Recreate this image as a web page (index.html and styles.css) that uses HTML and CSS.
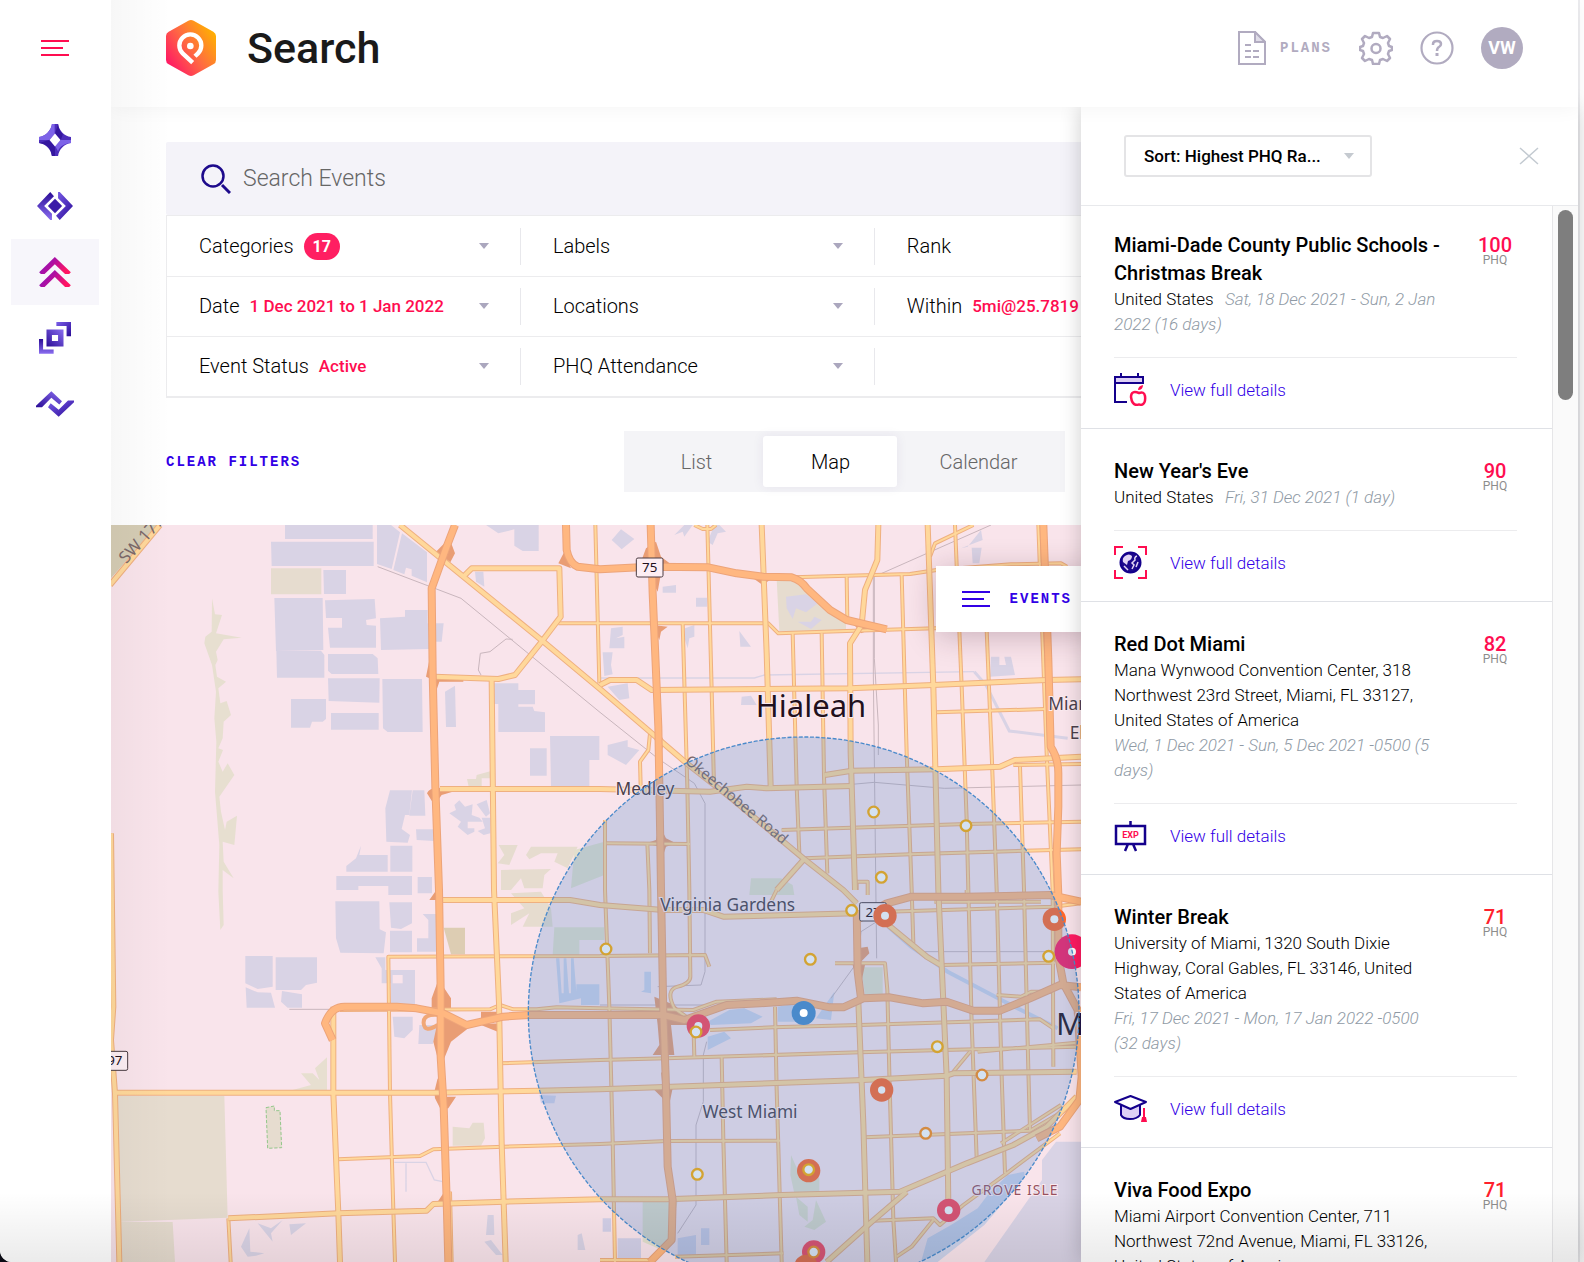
FILE: index.html
```html
<!DOCTYPE html>
<html lang="en">
<head>
  <meta charset="utf-8">
  <meta name="viewport" content="width=device-width, initial-scale=1">
  <title>Search</title>
  <link rel="stylesheet" href="styles.css">
</head>
<body>
<div class="app">

  <nav class="sidebar" aria-label="Main">
    <button class="menu-button" aria-label="Toggle menu">
      <svg width="28" height="16" viewBox="0 0 28 16" stroke="#ff0d50" stroke-width="2"><path d="M0 1h28M0 8h22M0 15h28"/></svg>
    </button>
    <svg width="0" height="0" class="defs" aria-hidden="true">
      <defs>
        <linearGradient id="violet" x1="0" y1="0" x2="1" y2="1"><stop offset="0" stop-color="#7a5fe8"/><stop offset=".5" stop-color="#5233c0"/><stop offset="1" stop-color="#2a0c96"/></linearGradient>
        <linearGradient id="violetUp" x1="0" y1="1" x2="1" y2="0"><stop offset="0" stop-color="#2a0c96"/><stop offset="1" stop-color="#8a6df0"/></linearGradient>
        <linearGradient id="violetDown" x1="0" y1="0" x2="0" y2="1"><stop offset="0" stop-color="#2a0c96"/><stop offset="1" stop-color="#8a6df0"/></linearGradient>
        <linearGradient id="pink" x1="0" y1="0" x2="1" y2=".4"><stop offset="0" stop-color="#7a12c8"/><stop offset=".5" stop-color="#b010a0"/><stop offset="1" stop-color="#ff1463"/></linearGradient>
      </defs>
    </svg>
    <a class="nav-item" href="#" aria-label="Home">
      <svg width="32" height="32" viewBox="0 0 94 94">
        <path fill="#4c2dbb" d="M38 0h18c2 18 18 36 38 38v18C74 58 58 76 56 94H38C36 76 20 58 0 56V38C20 36 36 18 38 0z"/>
        <path fill="#7d63e8" d="M38 0H46V30L30 47H0V38C20 36 36 18 38 0zM94 38V47L64 47 47 64 56 80C60 66 76 57 94 56z"/>
        <path fill="#35179f" d="M56 0 47 28 64 47 70 31Q58 18 56 0zM0 56 30 47 47 66V94H38Q34 60 0 56z"/>
        <path fill="#fff" d="M47 28 31 47l16 19 16-19z"/>
      </svg>
    </a>
    <a class="nav-item" href="#" aria-label="API">
      <svg width="36" height="28" viewBox="0 0 106 82"><path fill="url(#violetDown)" d="M39 0 50 12 21 41 44 64V82L39 82 0 41z"/><path fill="url(#violet)" d="M67 0 106 41 67 82 56 70 85 41 62 18V0z"/><path fill="#3b1ca8" d="M53 20 74 41 53 62 32 41z"/></svg>
    </a>
    <a class="nav-item active" href="#" aria-label="Search">
      <svg width="32" height="30" viewBox="0 0 93 88"><path fill="url(#pink)" d="M46 0 93 45 88 50H76L46 21 16 50H5L0 45z"/><path fill="url(#pink)" d="M46 38 93 83 88 88H76L46 59 16 88H5L0 83z"/></svg>
    </a>
    <a class="nav-item" href="#" aria-label="Products">
      <svg width="32" height="32" viewBox="0 0 94 94"><path fill="url(#violet)" d="M51 0h43v42H81V12H51z"/><path fill="url(#violetDown)" d="M0 50h12v31h31v12H0z"/><path fill="url(#violetUp)" fill-rule="evenodd" d="M22 22h50v50H22zM38 38v18h18V38z"/></svg>
    </a>
    <a class="nav-item" href="#" aria-label="Integrations">
      <svg width="38" height="26" viewBox="0 0 114 77"><path fill="url(#violetUp)" d="M46 0 78 30 70 40 46 20 18 48H0V44z"/><path fill="url(#violet)" d="M68 77 36 48 44 36 68 56 96 28H114V33z"/></svg>
    </a>
  </nav>

  <div class="main">
    <header class="header">
      <svg class="logo" width="50" height="56" viewBox="0 0 150 168">
        <defs><linearGradient id="brand" x1="0" y1="1" x2="1" y2=".25"><stop offset=".1" stop-color="#ff1466"/><stop offset=".55" stop-color="#ff6a42"/><stop offset="1" stop-color="#ffb100"/></linearGradient></defs>
        <path fill="url(#brand)" d="M67 2q8-4 16 0l59 33q8 5 8 13v72q0 9-8 13l-59 33q-8 4-16 0L8 133q-8-4-8-13V48q0-9 8-13z"/>
        <path fill="none" stroke="#fff" stroke-width="13" d="M80 128 50 100A33 33 0 1 1 96 100l-9 9"/>
        <circle cx="73" cy="78" r="10" fill="#fff"/>
      </svg>
      <h1>Search</h1>
      <div class="header-actions">
        <a class="plans" href="#">
          <svg width="28" height="34" viewBox="0 0 28 34" fill="none" stroke="#b1abc0" stroke-width="2"><path d="M1 1h16l10 10v22H1z"/><path d="M17 1v10h10z" fill="#e0dde8"/><path d="M7 14h6M7 20h6M7 26h6M15 20h6M15 26h6"/></svg>
          <span>PLANS</span>
        </a>
        <button aria-label="Settings">
          <svg width="34" height="34" viewBox="0 0 34 34" fill="none" stroke="#b1abc0" stroke-width="2.500" stroke-linejoin="round"><path d="M14 2h6l1 4 3 1 4-2 3 3-2 4 1 3 3 1v3l-3 1-1 3 2 4-3 3-4-2-3 1-1 4h-6l-1-4-3-1-4 2-3-3 2-4-1-3-3-1v-3l3-1 1-3-2-4 3-3 4 2 3-1z"/><circle cx="17" cy="17.500" r="4.500"/></svg>
        </button>
        <button aria-label="Help">
          <svg width="34" height="34" viewBox="0 0 34 34" fill="none" stroke="#b1abc0" stroke-width="2.200"><circle cx="17" cy="17" r="15.500"/><path d="M13 14v-1q0-3 4-3t4 3q0 2-2 3t-2 4" stroke-width="2.500"/><path d="M17 22v3" stroke-width="3"/></svg>
        </button>
        <button class="avatar">VW</button>
      </div>
    </header>

    <div class="content">
      <section class="filters">
        <div class="search-box">
          <svg width="30" height="30" viewBox="0 0 30 30" fill="none" stroke="#1d0a8c" stroke-width="2.500"><circle cx="12" cy="12" r="10.500"/><path d="M21 21l8 8" stroke-width="3"/></svg>
          <input type="search" aria-label="Search Events" placeholder="Search Events">
        </div>
        <div class="filter-grid">
          <button class="filter">Categories <span class="count">17</span><i class="caret"></i></button>
          <button class="filter">Labels<i class="caret"></i></button>
          <button class="filter">Rank</button>
          <button class="filter">Date <b>1 Dec 2021 to 1 Jan 2022</b><i class="caret"></i></button>
          <button class="filter">Locations<i class="caret"></i></button>
          <button class="filter">Within <b>5mi@25.7819</b></button>
          <button class="filter">Event Status <b>Active</b><i class="caret"></i></button>
          <button class="filter">PHQ Attendance<i class="caret"></i></button>
        </div>
      </section>

      <div class="toolbar">
        <button class="clear">CLEAR FILTERS</button>
        <div class="tabs">
          <button>List</button>
          <button class="selected">Map</button>
          <button>Calendar</button>
        </div>
      </div>

      <div class="map">
        <svg class="map-canvas" viewBox="0 0 4401 2211" preserveAspectRatio="xMinYMin slice" role="img" aria-label="Map of Miami">
          <defs>
            <g id="minor">
              <path d="M1467 1293 832 1295 837 1705 847 2055 852 2211M1467 1293 1782 1290 1795 1325"/>
              <path d="M687 1455 1137 1453 1167 1440 1207 1453 1277 1453 1337 1447 1467 1450 1747 1455 1817 1430 1997 1423"/>
              <path d="M1167 1615 1467 1605 1667 1600 2247 1582 2497 1575 2897 1565M2600 1580 2897 1553"/>
              <path d="M682 1903 927 1893 967 1873 1177 1865 1467 1857 1667 1848 2007 1847"/>
              <path d="M352 2080 359 2211M1017 2000 1022 2211"/>
              <path d="M1342 295H1972L2002 325 2207 318 2472 310 2790 305"/>
              <path d="M1453 0 1465 475M1482 885V1095L1495 1445 1505 1845 1512 2211"/>
              <path d="M1789 0 1802 495 1809 785M1750 0 1775 12H1800L1815 0"/>
              <path d="M1715 295 1729 785 1735 1095 1738 1355Q1738 1375 1700 1385T1690 1450L1747 1490 1750 1595"/>
              <path d="M2045 325 2057 785 2065 985M2132 325 2139 755 2149 1045M2207 155 2209 285"/>
              <path d="M2372 150 2387 685 2402 1095 2407 1255M2532 0 2552 485 2567 885 2572 1095 2582 1495 2597 1900"/>
              <path d="M2627 315 2642 685 2657 1095 2672 1655 2682 1945M2727 725 2739 1095 2752 1635 2757 1815"/>
              <path d="M2782 0 2807 685 2825 1095 2827 1625M1609 955 1615 1095 1617 1285M1487 955 1737 957"/>
              <path d="M2047 157 2397 147 2477 135 2700 118 2850 115 2868 125M2477 562 2802 552"/>
              <path d="M2012 915 2567 897 2910 890M2082 1000 2397 988 2647 980 2910 973M2707 720 2910 717"/>
              <path d="M1617 625 1612 675 1587 710 1589 785M2237 1095V1070H2270V1110"/>
              <path d="M2172 1315H2322L2329 1395 2335 1645 2347 2085 2355 2211"/>
              <path d="M2492 1320 2832 1313M1797 1515 1987 1507 2247 1500 2567 1490 2787 1483 2827 1510"/>
              <path d="M2527 1640 2577 1580M2262 1837 2757 1817 2897 1735"/>
              <path d="M1832 1595 1837 1845 1847 2211M1992 1445 1997 1695 2012 2211"/>
              <path d="M2287 2087 2467 2080 2487 2100 2557 2040 2687 1945 2847 1825M2357 2195 2402 2165 2467 2085"/>
              <path d="M1692 2195 2017 2185M1467 2205H1617M2327 1160 2827 1145 2910 1135M2657 1410 2730 1415 2760 1400H2830"/>
              <path d="M2670 1855 2850 1740M1997 1095 1980 1130M2567 1095V1110M2470 1130H2790"/>
              <path d="M2457 95 2472 55 2587 0"/>
            </g>
            <g id="major">
              <path d="M-3 180 147 0M0 925 7 1445 0 1545 12 1705 25 2211"/>
              <path d="M867 0 1057 155 1297 350 1467 492 1622 625 1727 715 1867 825 2077 1000 2197 1095 2237 1135"/>
              <path d="M1057 155 1082 130H1345L1349 275 1292 350 1212 450 1162 462 972 455"/>
              <path d="M1142 465 1149 1095 1164 1435 1172 1855 1184 2211"/>
              <path d="M987 792H1467L1797 800 1907 785 1967 790 2222 783"/>
              <path d="M7 1703H967L1282 1697 1467 1693 2257 1665 2507 1652 2527 1645 2897 1640"/>
              <path d="M667 1445V1705L682 2065 687 2211M987 1125H1377L1467 1140 1657 1155H1777L1837 1175 2237 1165"/>
              <path d="M352 2080 682 2065 947 2057 967 2037 1182 2030 1467 2023H1667L2012 2010 2367 2000 2567 1915 2707 1860 2807 1805 2897 1715"/>
              <path d="M1952 0 1967 385 1979 785M2252 300 2217 355 2219 685 2232 1095M2242 1430 2257 1795 2269 2211"/>
              <path d="M2302 0 2299 105 2262 195 2252 300M2450 0 2467 485 2482 1095 2507 1655 2512 2035"/>
              <path d="M1467 480 1497 465H1577L1622 495 2217 490 2467 480 2807 465 2910 463"/>
              <path d="M2142 750 2222 737 2477 733 2667 725 2712 705 2910 695"/>
              <path d="M2332 1200 2447 1295 2489 1320M2147 2211 2277 2095 2387 2000"/>
              <path d="M2077 1005 1997 1095"/>
            </g>
            <g id="highway">
              <path d="M1032 0 1007 65 962 190 965 445 973 785 984 1095 989 1395V1595L998 1745 1007 2025 1012 2211"/>
              <path d="M1619 0 1625 205 1642 605 1648 955 1650 1095 1657 1465 1664 1655 1670 1925 1685 2025 1682 2145 1617 2211"/>
              <path d="M1365 0 1367 75Q1375 115 1400 125L1467 133 1617 125 1792 127 1877 145 1957 155 2042 157Q2070 165 2087 190L2157 255 2207 285 2327 313"/>
              <path d="M665 1545 642 1495Q660 1445 700 1445H857L917 1450 997 1465 1067 1500 1177 1475 1252 1470H1657L1720 1485 1847 1440 1947 1435 2057 1427 2157 1447H2197L2257 1420 2337 1417 2437 1435 2507 1430 2587 1457H2667L2757 1420 2847 1380 2910 1387"/>
              <path d="M2797 0 2812 405 2819 665Q2842 700 2842 745V845L2837 985 2842 1110V1295L2857 1375 2900 1455 2912 1655 2905 1725 2847 1805 2777 1840"/>
              <path d="M2237 1185 2327 1135 2402 1115H2567L2817 1110 2910 1130M2237 1155 2240 1340 2250 1420"/>
            </g>
          </defs>

          <rect width="4401" height="2211" fill="#f9e4eb"/>

          <g fill="#e6dccf">
            <path fill="#d5ccb4" d="M0 0H140L0 160z"/>
            <path d="M480 130H631V208H480zM15 1713H340L350 2078 15 2091zM25 2091H185L192 2211H25z"/>
            <path d="M998 1208H1062V1288H1020z" fill="#ddcdb3"/>
            <path d="M1025 1805 1075 1810 1085 1793H1118L1122 1840 1110 1862H1025zM1997 163H2060L2205 295V318H2005z"/>
            <path d="M1068 762 1095 762 1097 750 1140 738V760H1112V785H1073z"/>
            <path d="M465 1748 490 1743V1757H507L512 1868 470 1870z" stroke="#94c78b" stroke-width="3" stroke-dasharray="10 5"/>
            <path d="M1163 960H1220L1195 1020 1160 1015 1180 990zM1260 965H1400L1370 1030 1330 1010 1340 985 1290 985 1255 1003 1245 990zM1170 1035 1320 1032 1300 1050 1295 1090H1240L1230 1060 1200 1095H1170z"/>
            <path d="M1200 1105 1290 1100 1320 1150 1325 1205H1235L1255 1165 1200 1200V1165L1240 1150z"/>
            <path d="M545 1695 600 1680 570 1645H605L625 1665 612 1630 648 1597V1695z" fill="#e7dfd0"/>
          </g>
          <path fill="#e7dfd0" d="M303 220 312 268 333 270 315 325 392 338 338 343 315 380 320 405 313 420 318 455 345 470 322 490 328 535 347 528 360 570 338 590 335 640 322 670 336 675 322 710 335 740 350 715 370 750 325 815 330 860 342 915 347 890 378 872 370 960 335 950 338 1010 368 1060 335 1035V1095L338 1200 328 1215 322 1100 325 960 312 800 316 650 310 580 315 500 303 420 280 355 283 335 302 320z"/>
          <path fill="#e2dfcd" d="M1390 975 1480 950V1050L1380 1090zM1920 1060H2010L2045 1080 2050 1110H1915zM2250 1327H2315V1410H2262zM2040 1890 2060 1935 2125 1960V2005H2050L2038 1950zM2055 2015 2090 2045V2090L2065 2070zM2115 2025 2145 2090 2110 2115 2080 2105 2105 2085zM1595 2030H1700L1670 2150 1640 2170 1595 2150zM1330 1207H1480V1245H1405V1290H1325z"/>
          <g fill="#d9d3e5">
            <path d="M522 0H785V42H522zM480 50H788V123H482zM798 0H840L867 22 842 132 798 117zM873 25 948 82V172L902 152V133L885 128 880 148 847 135zM637 135H705V207H639zM490 219H635L637 375 495 378zM642 226 791 222 795 280 765 285 767 300 795 302V368H657L651 308H693V279H645zM807 280 882 275V255H950V295H998L992 350H975L955 372 810 375z"/>
            <path d="M496 377H630L640 390V458H498zM651 387H785L800 400 802 447H662L651 437zM651 460H806L805 533 653 528zM814 462H933L935 621H830L816 610zM540 522H645V582L635 590H603L597 608H540zM660 564H803V614H660z"/>
            <path d="M1002 500 1032 482 1035 606H1005zM1148 475H1222V495H1272V538H1222V545H1265L1270 558 1302 562V621H1162V537H1148zM1257 670H1307V752H1257zM1317 633H1465V705H1435V783H1320zM837 796H903L895 870H882L872 912 897 930 890 953 826 950 823 850zM905 796H940L943 872H895zM915 913H970V948L917 945z"/>
            <path d="M750 962 745 990H830V1040H706V1023L735 1000zM838 962H904V1040H838zM676 1053H903V1110H832V1083H742V1095H676zM920 1056H963V1105H920zM1015 865 1035 855 1030 840 1045 826 1062 845 1085 838 1082 870 1105 878 1115 890H1070V910H1090V920L1070 930 1040 905 1050 890zM1097 838 1127 825 1137 865 1125 875zM1112 878H1138V925L1118 930 1100 918 1122 910z"/>
            <path d="M673 1129H805L806 1213 825 1222 818 1285 688 1283 675 1240zM835 1132H903V1195L870 1212 840 1208zM837 1217H903V1282H837zM935 1167H975V1280H918V1240H952V1185zM403 1293H485V1385L440 1392 403 1375zM494 1297H618V1373L585 1380 570 1395H494zM404 1387 440 1402 480 1403 492 1448H407zM513 1398 573 1408V1448H530L510 1430zM793 1297H823V1335H912V1440L840 1435V1375H812V1330zM845 1475H905V1515L880 1540 850 1535zM925 1500H990L965 1557H922z"/>
            <path d="M1125 0 1162 25 1210 13V62L1235 78H1283V0zM1092 140H1117L1120 185 1095 170zM1502 45 1530 13 1570 42 1532 73zM1655 185 1695 180V203H1655zM1755 218H1788V245H1755zM1500 310 1535 305V330L1515 340 1540 335V370H1495zM1475 382H1505L1500 420 1505 448 1480 453zM1490 485 1550 475 1555 520 1525 525zM1885 318 1920 365H1888zM1490 660 1550 645V665L1585 675 1545 720 1490 690zM1892 515 1920 512 1937 540H1890z"/>
            <path d="M1690 30 1720 0H1745L1720 35 1715 20zM1790 50 1810 0H1825L1845 20 1820 25 1805 60zM1722 310 1750 300V335L1735 340 1730 370 1722 345z"/>
            <path d="M2025 215 2085 208 2120 235 2085 262 2055 250 2045 282 2027 250zM2060 290H2100L2110 275 2132 285 2100 312zM2570 65 2610 15 2615 45 2550 70zM2582 68H2612L2605 115H2585zM2640 395H2665V420H2685L2680 395H2700L2712 450 2637 455z"/>
            <path d="M390 2165 415 2110 418 2180 460 2185 435 2192 410 2195zM440 2095 480 2110 515 2085 480 2125 485 2150zM535 2098 585 2095 540 2130zM1130 2070H1148L1150 2130 1125 2130zM1120 2150 1140 2145 1175 2190 1155 2190zM1400 2130 1412 2125 1423 2175H1400z"/>
            <path d="M2793 1905V1965L2620 2211H2910V1850H2835z"/>
          </g>
          <path fill="#f9e4eb" d="M845 1350H875V1375H845z"/>
          <g fill="none" stroke="#d9d3e5" stroke-width="9">
            <path d="M850 1912H945L970 1965 995 1970M885 1915V2000" stroke-width="4"/>
            <path d="M1469 459H1930L1960 450 2590 440" stroke-width="4"/>
            <path d="M2590 440 2625 480 2695 618 2870 640"/>
          </g>
          <g fill="#d3d0e8">
            <path d="M2450 2140 2520 2100 2600 2050 2630 2010 2660 1980 2690 1950 2740 1940 2740 1960 2620 2100 2480 2211H2430z" fill="#ccd2ea"/>
            <path d="M1335 1300H1345L1352 1405H1358V1300H1366L1374 1405H1380V1300H1388L1396 1400V1378H1465V1440H1410V1420L1345 1435zM1790 1490 1855 1455 1900 1450 1955 1475 1920 1495 1800 1500zM1790 1535 1840 1520 1860 1540 1790 1575zM2000 1445 2080 1430 2100 1490 2000 1490zM2115 1480 2170 1400 2160 1485zM1600 1340H1620V1405L1590 1400 1600 1395z" fill="#ccd2ea"/>
            <path d="M1285 1710 1335 1712 1330 1735 1290 1735zM1475 2080H1500V2120H1475zM1700 2140 1755 2130V2190H1700zM1770 2110H1795V2160H1770zM1520 2140H1590V2211H1520z"/>
          </g>
          <path d="M2332 1205 2400 1265 2510 1340 2700 1440 2840 1510" fill="none" stroke="#ccd2ea" stroke-width="12"/>

          <g fill="none" stroke="#c9b6bd" stroke-width="3">
            <path d="M800 125 1050 220 1467 562 1640 700 1750 775 1782 835V1340L1770 1380 1640 1385M2640 0 2290 155V400L2302 600V690M2287 140 2287 450 2297 1300M1110 450 1102 435 1108 385 1137 380 1185 342 1205 343"/>
            <path d="M2200 780 2290 772 2500 790 2910 780M1787 1550 1777 1590V1730L1755 1800V2040L1700 2125M2160 1420 2240 1310 2250 1220 2297 1190M2440 1280H2830M535 1453H690M1467 1440H1800"/>
          </g>

          <g fill="#e99d74">
            <path d="M1015 40 1032 85 1018 112 975 80zM957 395 970 440 980 470 945 455zM970 450 1057 455V470L985 470 975 500zM948 805Q955 790 975 790L1025 785V800L992 810 970 840zM1605 70 1590 110 1570 125 1617 150 1690 125 1650 95 1635 50zM1610 140 1640 200 1650 145zM1625 300 1670 305 1650 320 1645 345zM1920 155H1990L1955 180zM2210 275 2290 310 2250 325zM1342 115 1360 80 1380 130z"/>
            <path d="M980 1370 962 1420V1450H1020V1420L1000 1390zM985 1465 1060 1500 1165 1495 1110 1480 1020 1550 1000 1600 985 1620 967 1550zM980 1660 970 1700 972 1720 990 1755 1012 1750 1035 1715H1000zM1110 1460H1170L1160 1520 1110 1500zM980 2030 1000 2000V2035zM955 1125 980 1090V1125zM1645 900 1635 945 1605 955 1645 965 1650 1010 1665 965 1695 955 1665 940z"/>
            <path d="M1630 1415 1690 1440 1725 1470 1730 1500 1680 1500 1690 1590H1640L1625 1590 1645 1560 1640 1500zM1650 1640 1685 1690 1670 1760 1655 1720 1630 1695 1655 1690zM1635 600 1660 650 1645 700 1630 640zM2225 1320H2262L2245 1400zM2240 1270 2270 1265 2275 1285 2250 1310z"/>
          </g>
          <path d="M985 1470Q935 1465 938 1495T980 1500" fill="none" stroke="#f0a777" stroke-width="12"/>

          <use href="#minor" class="road casing minor"/>
          <use href="#minor" class="road fill minor"/>
          <use href="#major" class="road casing major"/>
          <use href="#major" class="road fill major"/>
          <use href="#highway" class="road casing highway"/>
          <use href="#highway" class="road fill highway"/>

          <g class="place">
            <text class="city" x="2100" y="575" text-anchor="middle">Hialeah</text>
            <text x="1602" y="810" text-anchor="middle">Medley</text>
            <text x="1850" y="1157" text-anchor="middle">Virginia Gardens</text>
            <text x="1917" y="1780" text-anchor="middle">West Miami</text>
            <text x="2812" y="555">Miami</text>
            <text x="2876" y="642">El Portal</text>
            <text class="city" x="2835" y="1530">Miami</text>
            <text class="isle" x="2712" y="2010" text-anchor="middle">GROVE ISLE</text>
            <text class="street" transform="translate(1720 712) rotate(40)">Okeechobee Road</text>
            <text class="street dark" transform="translate(46 118) rotate(-48)">SW 177th</text>
          </g>
          <g class="shield">
            <rect x="1576" y="99" width="80" height="57" rx="5"/><text x="1616" y="142">75</text>
            <rect x="-60" y="1579" width="110" height="57" rx="5"/><text x="0" y="1621">997</text>
            <rect x="2246" y="1133" width="80" height="55" rx="5"/><text x="2286" y="1175">27</text>
          </g>

          <g class="marker">
            <g fill="#ff672c"><circle cx="2322" cy="1172" r="35"/><circle cx="2830" cy="1183" r="35"/><circle cx="2312" cy="1695" r="35"/><circle cx="2093" cy="1937" r="35"/></g>
            <g fill="#ff4357"><circle cx="1762" cy="1503" r="35"/><circle cx="2513" cy="2056" r="35"/><circle cx="2108" cy="2181" r="35"/></g>
            <circle cx="2085" cy="2224" r="35" fill="#ff672c"/>
            <circle cx="2883" cy="1280" r="52" fill="#ff1b62"/>
            <g fill="#fff"><circle cx="2322" cy="1172" r="12"/><circle cx="2830" cy="1183" r="12"/><circle cx="2312" cy="1695" r="11"/><circle cx="1762" cy="1503" r="12"/><circle cx="2513" cy="2056" r="12"/><circle cx="2883" cy="1280" r="12"/></g>
            <g fill="#fff" stroke="#ffad00" stroke-width="7"><circle cx="2288" cy="861" r="16"/><circle cx="2565" cy="902" r="16"/><circle cx="2311" cy="1057" r="16"/><circle cx="2222" cy="1156" r="16"/><circle cx="1485" cy="1272" r="16"/><circle cx="2098" cy="1303" r="16"/><circle cx="2813" cy="1294" r="16"/><circle cx="1755" cy="1521" r="16"/><circle cx="2479" cy="1565" r="16"/><circle cx="1759" cy="1948" r="16"/><circle cx="2093" cy="1934" r="16"/></g>
            <g fill="#fff" stroke="#ff8c14" stroke-width="7"><circle cx="2613" cy="1650" r="16"/><circle cx="2444" cy="1825" r="16"/><circle cx="2108" cy="2181" r="16"/></g>
          </g>
          <circle class="radius" cx="2078" cy="1462" r="826"/>
          <circle cx="2078" cy="1464" r="36" fill="#4a8acb"/><circle cx="2078" cy="1464" r="12" fill="#fff"/>
        </svg>
        <button class="events-button">
          <svg width="28" height="17" viewBox="0 0 28 17" stroke="#3200e6" stroke-width="2"><path d="M0 1h28M0 8h22M0 15h28"/></svg>
          EVENTS
        </button>
      </div>

      <aside class="panel">
        <div class="panel-head">
          <div class="sort">
            <select aria-label="Sort"><option>Sort: Highest PHQ Ra...</option></select>
            <i class="caret"></i>
          </div>
          <button class="close" aria-label="Close"><svg width="20" height="18" viewBox="0 0 20 18" stroke="#c3cad1" stroke-width="1.500"><path d="M1 1l18 16M19 1 1 17"/></svg></button>
        </div>
        <div class="panel-body">
          <div class="events">
            <article class="event">
              <div class="event-top">
                <div class="event-text">
                  <h2>Miami-Dade County Public Schools - Christmas Break</h2>
                  <p>United States <em class="same-line">Sat, 18 Dec 2021 - Sun, 2 Jan 2022 (16 days)</em></p>
                </div>
                <div class="rank"><strong>100</strong>PHQ</div>
              </div>
              <div class="event-foot">
                <svg width="33" height="33" viewBox="0 0 33 33" fill="none" stroke="#14008c" stroke-width="2"><path d="M1 4h28v6H1z" fill="#ddd0f5"/><path d="M1 8v21h12M7 0v4M24 0v4"/><path d="M25 20q-8-3-8 4 1 8 6 8 2-1 4 0 5-1 4-9-1-5-6-3z" stroke="#ff0d50" stroke-width="2.500"/><path d="M24 17q0-4 5-5 0 5-5 5z" fill="#ff0d50" stroke="none"/></svg>
                <a href="#">View full details</a>
              </div>
            </article>
            <article class="event">
              <div class="event-top">
                <div class="event-text">
                  <h2>New Year's Eve</h2>
                  <p>United States <em class="same-line">Fri, 31 Dec 2021 (1 day)</em></p>
                </div>
                <div class="rank"><strong>90</strong>PHQ</div>
              </div>
              <div class="event-foot">
                <svg width="33" height="33" viewBox="0 0 33 33" fill="none" stroke-width="2"><path d="M1 9V1h8M24 1h8v8M32 24v8h-8M9 32H1v-8" stroke="#ff0d50"/><circle cx="16.500" cy="16.500" r="10" fill="#1d0a8c" stroke="#14008c"/><path d="M11 10q4-3 7 0 0 4-4 5l-1 4-4-3q-1-4 2-6z" fill="#e3d6f5"/><path d="M23 10q-3 1-2 4l-3 3 2 2-2 4M10 20l4 4M24 16l-2 5" stroke="#e3d6f5" stroke-width="1.500"/></svg>
                <a href="#">View full details</a>
              </div>
            </article>
            <article class="event">
              <div class="event-top">
                <div class="event-text">
                  <h2>Red Dot Miami</h2>
                  <p>Mana Wynwood Convention Center, 318 Northwest 23rd Street, Miami, FL 33127, United States of America</p>
                  <p><em>Wed, 1 Dec 2021 - Sun, 5 Dec 2021 -0500 (5 days)</em></p>
                </div>
                <div class="rank"><strong>82</strong>PHQ</div>
              </div>
              <div class="event-foot">
                <svg width="33" height="33" viewBox="0 0 33 33" fill="none" stroke="#14008c" stroke-width="2"><path d="M2 7h29v18H2zM16.500 2v5M14 25l-3 7M19 25l3 7" stroke-width="2.500"/><text class="exp" x="16.500" y="19" text-anchor="middle">EXP</text></svg>
                <a href="#">View full details</a>
              </div>
            </article>
            <article class="event">
              <div class="event-top">
                <div class="event-text">
                  <h2>Winter Break</h2>
                  <p>University of Miami, 1320 South Dixie Highway, Coral Gables, FL 33146, United States of America</p>
                  <p><em>Fri, 17 Dec 2021 - Mon, 17 Jan 2022 -0500 (32 days)</em></p>
                </div>
                <div class="rank warm"><strong>71</strong>PHQ</div>
              </div>
              <div class="event-foot">
                <svg width="33" height="33" viewBox="0 0 33 33" fill="none" stroke="#14008c" stroke-width="2" stroke-linejoin="round"><path d="M7 12v11q2 4 9 4t10-4V12" fill="#ddd0f5"/><path d="M16.500 4 32 10l-15.500 7L1 10z" fill="#fff"/><path d="M30 16v10" stroke="#ff0d50"/><path d="M28 25h4l1 5h-6z" fill="#ff0d50" stroke="none"/></svg>
                <a href="#">View full details</a>
              </div>
            </article>
            <article class="event">
              <div class="event-top">
                <div class="event-text">
                  <h2>Viva Food Expo</h2>
                  <p>Miami Airport Convention Center, 711 Northwest 72nd Avenue, Miami, FL 33126, United States of America</p>
                </div>
                <div class="rank warm"><strong>71</strong>PHQ</div>
              </div>
            </article>
          </div>
          <div class="scroll-track"><div class="scroll-thumb"></div></div>
        </div>
      </aside>
    </div>
  </div>
</div>
</body>
</html>
```

FILE: styles.css
```css
* {
  box-sizing: border-box;
}

body {
  margin: 0;
  background: #0b0b14;
  font-family: Roboto, "Liberation Sans", sans-serif;
  font-size: 17px;
  color: #000;
}

button {
  padding: 0;
  border: 0;
  background: none;
  font: inherit;
  color: inherit;
}

a {
  text-decoration: none;
}

h1, h2, p {
  margin: 0;
}

svg {
  display: block;
  flex: none;
}

.app {
  position: relative;
  display: flex;
  height: 100vh;
  overflow: hidden;
  padding-right: 4px;
  border-bottom-left-radius: 12px;
  background: #fff;
}

/* soft shade along the bottom edge of the window */
.app::after {
  content: "";
  position: absolute;
  z-index: 5;
  left: 0;
  right: 0;
  bottom: 0;
  height: 70px;
  background: linear-gradient(to bottom, rgba(0, 0, 0, 0), rgba(0, 0, 0, .08));
  pointer-events: none;
}

.defs {
  position: absolute;
}

/* sidebar */
.sidebar {
  position: relative;
  z-index: 4;
  flex: none;
  width: 111px;
  padding-right: 1px;
  display: flex;
  flex-direction: column;
  align-items: center;
  background: #fff;
}

.menu-button {
  display: flex;
  align-items: center;
  height: 107px;
  padding-bottom: 11px;
}

.nav-item {
  display: flex;
  align-items: center;
  justify-content: center;
  width: 88px;
  height: 66px;
}

.nav-item.active {
  background: #f7f6fb;
}

/* header */
.main {
  position: relative;
  flex: 1;
  min-width: 0;
  display: flex;
  flex-direction: column;
  border-right: 2px solid #ededf0;
}

.main::before {
  content: "";
  position: absolute;
  z-index: 3;
  left: 0;
  top: 0;
  bottom: 0;
  width: 60px;
  background: linear-gradient(to right, rgba(0, 0, 0, .03), rgba(0, 0, 0, 0));
  pointer-events: none;
}

.header {
  position: relative;
  z-index: 2;
  flex: none;
  display: flex;
  align-items: center;
  height: 107px;
  padding: 0 55px 12px;
  background: #fff;
  box-shadow: 0 0 20px rgba(0, 0, 0, .05);
}

h1 {
  margin-left: 31px;
  font-size: 43px;
  font-weight: 500;
  color: #1a1a1a;
}

.header-actions {
  display: flex;
  align-items: center;
  gap: 27px;
  margin-left: auto;
}

.plans {
  display: flex;
  align-items: center;
  gap: 14px;
}

.plans span, .clear, .events-button {
  font-family: "Liberation Mono", monospace;
  font-size: 14px;
  font-weight: 700;
  letter-spacing: 2px;
}

.plans span {
  color: #b1abc0;
}

.avatar {
  width: 42px;
  height: 42px;
  border-radius: 50%;
  background: #b1abc0;
  color: #fff;
  font-size: 18px;
  font-weight: 700;
}

/* search and filters */
.content {
  position: relative;
  flex: 1;
  min-height: 0;
  display: flex;
  flex-direction: column;
}

.filters {
  margin: 35px 55px 0;
}

.search-box {
  display: flex;
  align-items: center;
  gap: 12px;
  height: 73px;
  padding: 0 35px;
  border-radius: 2px;
  background: #f4f3f9;
}

.search-box input {
  flex: 1;
  border: 0;
  padding: 0;
  outline: 0;
  background: none;
  font: inherit;
  font-size: 23px;
  font-weight: 300;
}

.search-box input::placeholder {
  color: #666;
}

.filter-grid {
  display: grid;
  grid-template-columns: 35fr 35fr 64fr;
  grid-auto-rows: 60px;
  border: 1px solid #ececee;
  border-bottom-width: 2px;
  background: linear-gradient(#ececee, #ececee) 0 60px / 100% 1px no-repeat,
              linear-gradient(#ececee, #ececee) 0 120px / 100% 1px no-repeat;
}

.filter {
  position: relative;
  display: flex;
  align-items: center;
  gap: 10px;
  padding: 0 32px;
  font-size: 20px;
  font-weight: 300;
  text-align: left;
}

.filter:not(:nth-child(3n))::after {
  content: "";
  align-self: center;
  position: absolute;
  right: 0;
  width: 1px;
  height: 37px;
  background: #e8e8ec;
}

.filter b {
  font-size: 17px;
  font-weight: 500;
  color: #ff0d50;
}

.count {
  padding: 0 9px;
  border-radius: 14px;
  background: #ff1f62;
  color: #fff;
  font-size: 16px;
  font-weight: 700;
  line-height: 27px;
}

.caret {
  margin-left: auto;
  border: 5px solid transparent;
  border-top: 6px solid #aba7be;
  border-bottom: 0;
}

.toolbar {
  display: grid;
  grid-template-columns: 1fr auto 1fr;
  align-items: center;
  padding: 33px 55px;
}

.clear {
  justify-self: start;
  color: #3200e6;
}

.tabs {
  display: flex;
  padding: 5px;
  background: #f4f4f7;
}

.tabs button {
  min-width: 134px;
  height: 51px;
  padding: 0 42px;
  border-radius: 3px;
  font-size: 20px;
  font-weight: 300;
  color: #666;
}

.tabs .selected {
  background: #fff;
  color: #000;
  box-shadow: 0 0 12px rgba(60, 40, 120, .08);
}

/* map */
.map {
  position: relative;
  flex: 1;
  min-height: 0;
  overflow: hidden;
}

.map-canvas {
  width: 100%;
  height: 100%;
}

.road {
  fill: none;
  stroke-linejoin: round;
}

.road.minor { stroke: #ffd89b; stroke-width: 6; }
.road.major { stroke: #ffd89b; stroke-width: 12; }
.road.highway { stroke: #ffb780; stroke-width: 18; }
.road.minor.casing { stroke: #efb080; stroke-width: 12; }
.road.major.casing { stroke: #efb080; stroke-width: 18; }
.road.highway.casing { stroke: #eda479; stroke-width: 24; }

.place {
  font-family: "Noto Sans", sans-serif;
  font-size: 52px;
  fill: #4b3f4b;
  stroke: #fbeaf0;
  stroke-width: 6;
  paint-order: stroke;
}

.place .city {
  font-size: 93px;
  fill: #22101c;
}

.place .isle {
  font-size: 42px;
  letter-spacing: 3px;
  fill: #97505e;
}

.place .street {
  font-size: 45px;
  fill: #7b6869;
  stroke: none;
}

.place .dark {
  font-size: 50px;
}

.shield rect {
  fill: #fdeef3;
  stroke: #4a3b42;
  stroke-width: 3;
}

.shield text {
  font-family: "Noto Sans", sans-serif;
  font-size: 40px;
  text-anchor: middle;
  fill: #22101c;
}

.radius {
  fill: rgba(81, 136, 203, .25);
  stroke: #4a8acb;
  stroke-width: 4;
  stroke-dasharray: 12 5;
}

.events-button {
  position: absolute;
  top: 41px;
  right: 480px;
  display: flex;
  align-items: center;
  gap: 20px;
  height: 66px;
  padding: 0 26px;
  background: #fff;
  color: #3200e6;
  box-shadow: 0 4px 30px rgba(60, 20, 40, .25);
}

/* results panel */
.panel {
  position: absolute;
  z-index: 1;
  top: 0;
  right: 0;
  bottom: 0;
  width: 497px;
  display: flex;
  flex-direction: column;
  background: #fff;
  box-shadow: 0 0 20px rgba(0, 0, 0, .2);
}

.panel-head {
  flex: none;
  display: flex;
  align-items: center;
  justify-content: space-between;
  height: 99px;
  padding: 0 39px 0 43px;
  border-bottom: 1px solid #e8e9ec;
}

.sort {
  position: relative;
  width: 248px;
}

.sort select {
  width: 100%;
  height: 42px;
  padding: 0 40px 0 18px;
  appearance: none;
  border: 2px solid #e4e4e6;
  border-radius: 3px;
  background: #fff;
  font: inherit;
  font-weight: 500;
  color: #000;
}

.sort .caret {
  position: absolute;
  right: 18px;
  top: 18px;
  border-top-color: #c5cad0;
}

.panel-body {
  flex: 1;
  min-height: 0;
  display: flex;
}

.events {
  flex: 1;
  min-width: 0;
  overflow: hidden;
}

.event {
  padding: 28px 35px 0 33px;
  border-bottom: 1px solid #dfe1e6;
}

.event:first-child {
  padding-top: 25px;
}

.event-top {
  display: flex;
  justify-content: space-between;
  padding-bottom: 20px;
}

.event-text {
  width: 332px;
}

.event h2 {
  font-size: 20px;
  font-weight: 500;
  line-height: 28px;
}

.event p {
  font-weight: 300;
  line-height: 25px;
}

.event em {
  color: #8f9aa5;
}

.event .same-line {
  margin-left: 7px;
}

.rank {
  display: flex;
  flex-direction: column;
  align-items: center;
  width: 44px;
  padding-top: 5px;
  font-size: 12px;
  line-height: 12px;
  color: #8d8d8d;
}

.rank strong {
  font-size: 20px;
  font-weight: 500;
  line-height: 18px;
  color: #ff0d50;
}

.rank.warm strong {
  color: #ff202c;
}

.event-foot {
  display: flex;
  align-items: center;
  gap: 23px;
  padding: 15px 0 22px;
  border-top: 1px solid #ececee;
}

.event-foot a {
  font-weight: 300;
  color: #3200e6;
}

.exp {
  font-size: 9px;
  font-weight: 700;
  fill: #ff0d50;
  stroke: none;
}

.scroll-track {
  width: 26px;
  padding: 4px 5px;
  border-left: 1px solid #e6e6e8;
  background: #fafafa;
}

.scroll-thumb {
  width: 15px;
  height: 190px;
  border-radius: 8px;
  background: #7e7e7e;
}
```
